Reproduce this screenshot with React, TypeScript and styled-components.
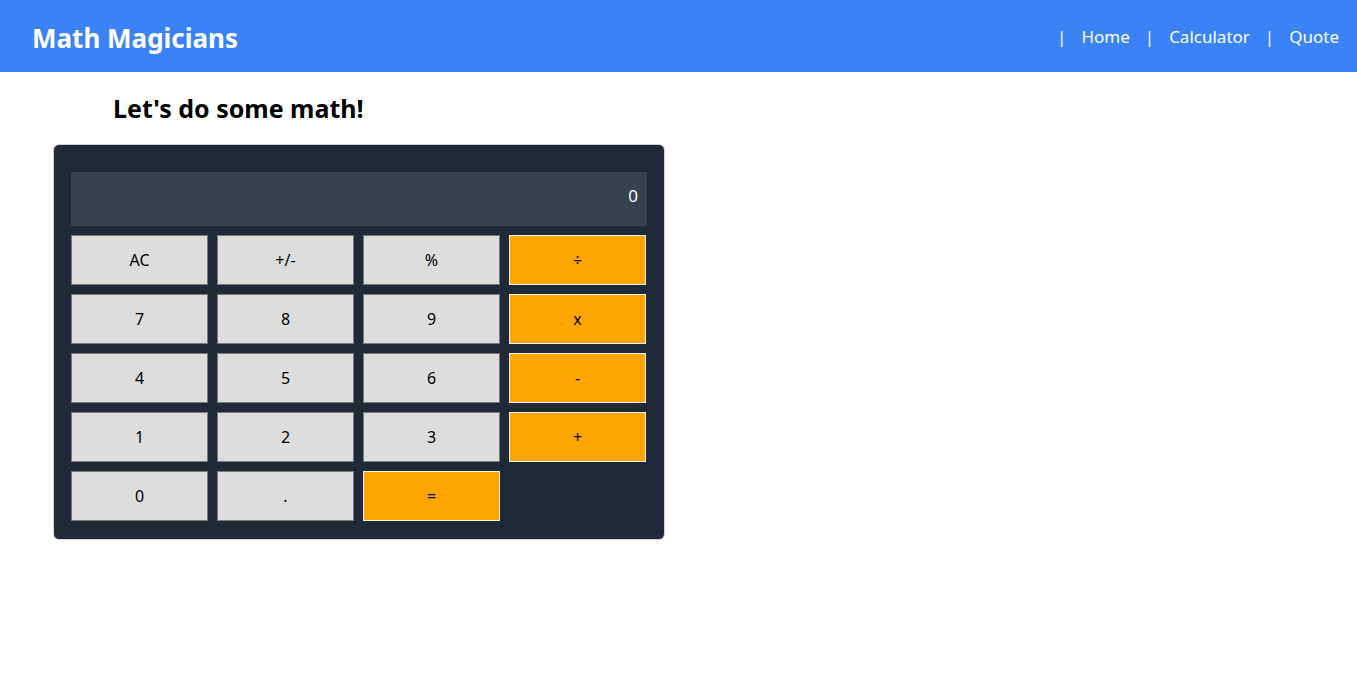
import React from "react"
import styled, { createGlobalStyle } from "styled-components"

const GlobalStyle = createGlobalStyle`
	* { box-sizing: border-box; }
	body {
		margin: 0;
		font-family: 'Noto Sans', 'Open Sans', sans-serif;
		background: #fff;
	}
`

const rows: { label: string, op?: boolean }[][] = [
	[{ label: 'AC' }, { label: '+/-' }, { label: '%' }, { label: '÷', op: true }],
	[{ label: '7' }, { label: '8' }, { label: '9' }, { label: 'x', op: true }],
	[{ label: '4' }, { label: '5' }, { label: '6' }, { label: '-', op: true }],
	[{ label: '1' }, { label: '2' }, { label: '3' }, { label: '+', op: true }],
	[{ label: '0' }, { label: '.' }, { label: '=', op: true }],
]

const App = () => {
	return (
		<>
			<GlobalStyle />
			<Header>
				<Logo>Math Magicians</Logo>
				<Nav>
					<Sep>|</Sep><NavLink href="#">Home</NavLink>
					<Sep>|</Sep><NavLink href="#">Calculator</NavLink>
					<Sep>|</Sep><NavLink href="#">Quote</NavLink>
				</Nav>
			</Header>
			<Main>
				<Title>Let's do some math!</Title>
				<Calc>
					<Display>0</Display>
					<Keys>
						{rows.flat().map((k) => (
							<Key key={k.label} $op={k.op}>{k.label}</Key>
						))}
					</Keys>
				</Calc>
			</Main>
		</>
	)
}

const Header = styled.header`
	height: 72px;
	background: #3b82f6;
	display: flex;
	align-items: center;
	justify-content: space-between;
	padding: 0 18px 0 32px;
`

const Logo = styled.h1`
	margin: 0;
	color: #fff;
	font-size: 26px;
	font-weight: 700;
	margin-top: 3px;
`

const Nav = styled.nav`
	display: flex;
	align-items: center;
	color: #fff;
	font-size: 17px;
	margin-top: 1px;
`

const Sep = styled.span`
	margin: 0 15px 0 0;
	&:not(:first-child) { margin-left: 15px; }
`

const NavLink = styled.a`
	color: #fff;
	text-decoration: none;
`

const Main = styled.main`
	padding: 20px 0 0 53px;
`

const Title = styled.h2`
	margin: 0 0 20px 60px;
	font-size: 25px;
	font-weight: 700;
	line-height: 32px;
	color: #000;
`

const Calc = styled.div`
	width: 612px;
	background: #1f2937;
	border: 1px solid #d1d5db;
	border-radius: 6px;
	padding: 27px 17px 18px;
`

const Display = styled.div`
	height: 54px;
	background: #374151;
	color: #fff;
	font-size: 17px;
	display: flex;
	align-items: center;
	justify-content: flex-end;
	padding: 0 9px 8px 0;
	margin-bottom: 9px;
`

const Keys = styled.div`
	display: grid;
	grid-template-columns: repeat(4, 137px);
	grid-auto-rows: 50px;
	column-gap: 9px;
	row-gap: 9px;
`

const Key = styled.button<{ $op?: boolean }>`
	font-family: 'Noto Sans', 'Open Sans', sans-serif;
	font-size: 16px;
	color: #000;
	background: ${(p) => (p.$op ? '#ffa500' : '#dddddd')};
	border: 1px solid ${(p) => (p.$op ? '#f3f3f3' : '#7a7a7a')};
	padding: 0;
	cursor: pointer;
`

export default App
